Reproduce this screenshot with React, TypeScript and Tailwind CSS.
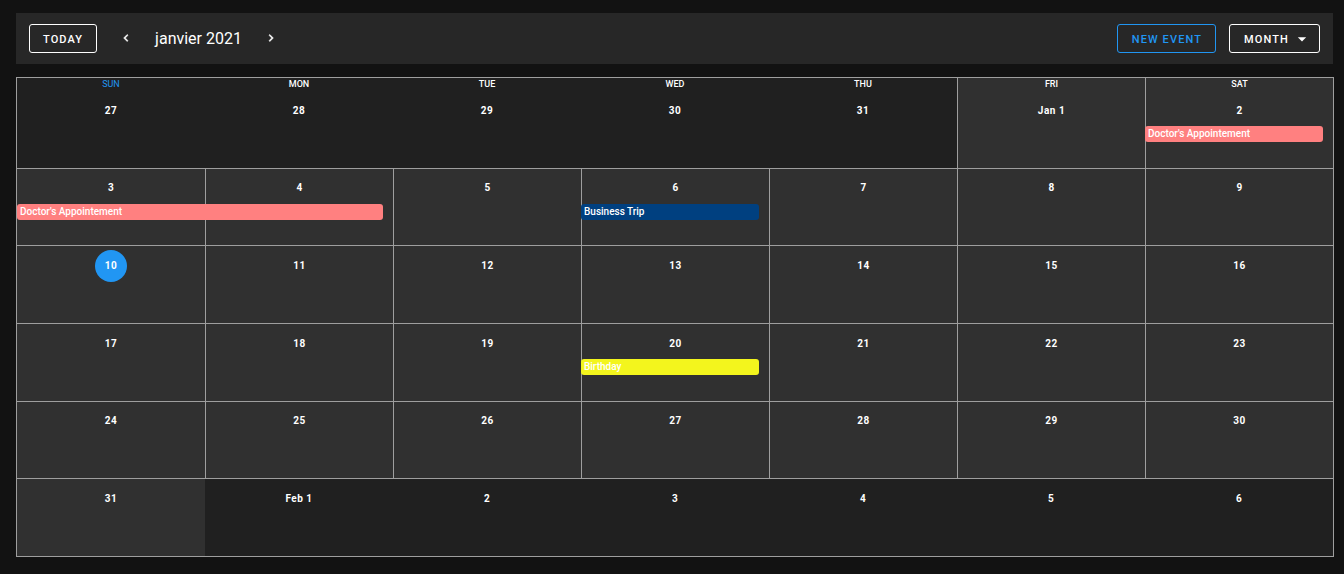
import { useState } from "react";

type Day = { label: string; outside?: boolean; today?: boolean };
type CalendarEvent = { name: string; placement: string; color: string };
type Week = { days: Day[]; events?: CalendarEvent[] };

const weekdays = ["Sun", "Mon", "Tue", "Wed", "Thu", "Fri", "Sat"];

const inside = (...labels: string[]): Day[] => labels.map((label) => ({ label }));
const outside = (...labels: string[]): Day[] =>
  labels.map((label) => ({ label, outside: true }));

const weeks: Week[] = [
  {
    days: [...outside("27", "28", "29", "30", "31"), ...inside("Jan 1", "2")],
    events: [
      { name: "Doctor's Appointement", placement: "col-start-7", color: "bg-[#ff8080]" },
    ],
  },
  {
    days: inside("3", "4", "5", "6", "7", "8", "9"),
    events: [
      { name: "Doctor's Appointement", placement: "col-start-1 col-span-2", color: "bg-[#ff8080]" },
      { name: "Business Trip", placement: "col-start-4", color: "bg-[#004080]" },
    ],
  },
  { days: [{ label: "10", today: true }, ...inside("11", "12", "13", "14", "15", "16")] },
  {
    days: inside("17", "18", "19", "20", "21", "22", "23"),
    events: [{ name: "Birthday", placement: "col-start-4", color: "bg-[#f3f51d]" }],
  },
  { days: inside("24", "25", "26", "27", "28", "29", "30") },
  { days: [...inside("31"), ...outside("Feb 1", "2", "3", "4", "5", "6")] },
];

const columns = [
  "col-start-1",
  "col-start-2",
  "col-start-3",
  "col-start-4",
  "col-start-5",
  "col-start-6",
  "col-start-7",
];

function Chevron({ path }: { path: string }) {
  return (
    <svg
      viewBox="0 0 24 24"
      className="size-3.5 fill-current stroke-current stroke-1"
      aria-hidden="true"
    >
      <path d={path} />
    </svg>
  );
}

function Toolbar() {
  const [view, setView] = useState("month");
  return (
    <header className="mr-px flex items-center gap-[13px] bg-[#272727] px-[13px] py-[11px]">
      <button className="h-[29px] rounded-[3px] border border-white px-[13px] pt-[3px] text-[11px] leading-4 font-medium uppercase tracking-widest">
        Today
      </button>
      <button aria-label="Previous month" className="-my-2 flex size-8 items-center justify-center rounded-full pb-px">
        <Chevron path="M15.41 16.58 10.83 12l4.58-4.59L14 6l-6 6 6 6z" />
      </button>
      <h1 className="text-base">janvier 2021</h1>
      <button aria-label="Next month" className="-my-2 flex size-8 items-center justify-center rounded-full pb-px">
        <Chevron path="M8.59 16.58 13.17 12 8.59 7.41 10 6l6 6-6 6z" />
      </button>
      <div className="grow" />
      <button className="h-[29px] rounded-[3px] border border-[#2196f3] pt-[3px] pr-[13px] pl-[14px] text-[11px] leading-4 font-medium uppercase tracking-widest text-[#2196f3]">
        New event
      </button>
      <div className="relative">
        <select
          aria-label="Calendar view"
          value={view}
          onChange={(e) => setView(e.target.value)}
          className="block h-[29px] appearance-none rounded-[3px] border border-white bg-transparent pt-[3px] pr-[30px] pl-[14px] text-[11px] leading-4 font-medium uppercase tracking-widest"
        >
          <option value="day">Day</option>
          <option value="week">Week</option>
          <option value="month">Month</option>
        </select>
        <svg
          viewBox="0 0 24 24"
          className="pointer-events-none absolute top-[5px] right-2 size-5 fill-current"
          aria-hidden="true"
        >
          <path d="M7 10l5 5 5-5z" />
        </svg>
      </div>
    </header>
  );
}

function WeekRow({ week, first }: { week: Week; first: boolean }) {
  return (
    <div
      role="row"
      className={`grid grow grid-cols-7 border-b border-[#9e9e9e] ${first ? "basis-[14px]" : "basis-px"}`}
    >
      {week.days.map((day, i) => (
        <div
          key={day.label}
          role="gridcell"
          className={`row-start-1 flex flex-col items-center ${columns[i]} ${
            day.outside ? "bg-[#202020]" : "bg-[#303030]"
          } ${!day.outside && i > 0 ? "border-l border-[#9e9e9e]" : ""}`}
        >
          {first && (
            <div
              className={`h-[13px] text-[9px] leading-3 uppercase ${i === 0 ? "text-[#2196f3]" : "font-medium"}`}
            >
              {weekdays[i]}
            </div>
          )}
          <button
            className={`mt-1 flex h-8 min-w-8 items-center justify-center rounded-full pb-px text-[10px] leading-4 font-bold tracking-wider ${
              day.today ? "bg-[#2196f3]" : ""
            }`}
          >
            {day.label}
          </button>
        </div>
      ))}
      {week.events?.map((event) => (
        <div
          key={event.placement}
          className={`row-start-1 mr-[10px] h-4 truncate rounded-[3px] pl-[3px] text-[10px] leading-4 font-medium ${
            first ? "mt-12" : "mt-[35px]"
          } ${event.placement} ${event.color}`}
        >
          {event.name}
        </div>
      ))}
    </div>
  );
}

export default function App() {
  return (
    <main className="flex min-h-screen flex-col gap-[13px] bg-[#121212] pt-[13px] pr-[10px] pb-[17px] pl-4 font-[Roboto,sans-serif] text-white">
      <Toolbar />
      <div
        role="grid"
        aria-label="janvier 2021"
        className="flex grow flex-col border border-b-0 border-[#9e9e9e]"
      >
        {weeks.map((week, i) => (
          <WeekRow key={week.days[0].label} week={week} first={i === 0} />
        ))}
      </div>
    </main>
  );
}
